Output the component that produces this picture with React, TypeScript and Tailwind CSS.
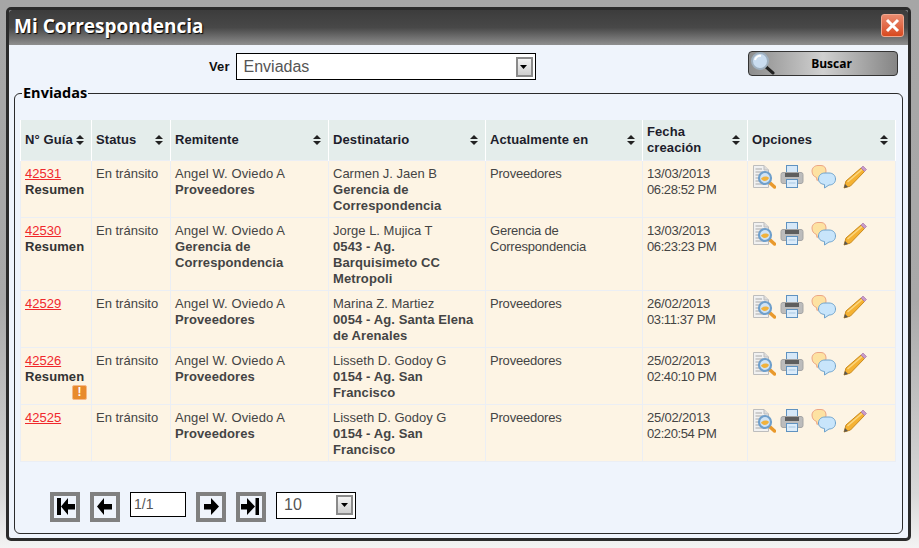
import React from "react";

type Row = {
  guia: string;
  resumen?: boolean;
  alert?: boolean;
  remitente: string;
  remArea: string;
  dest: string;
  destArea: string;
  actual: string;
  fecha: string;
  hora: string;
  height: string;
};

const rows: Row[] = [
  { guia: "42531", resumen: true, remitente: "Angel W. Oviedo A", remArea: "Proveedores", dest: "Carmen J. Jaen B", destArea: "Gerencia de Correspondencia", actual: "Proveedores", fecha: "13/03/2013", hora: "06:28:52 PM", height: "h-[57px]" },
  { guia: "42530", resumen: true, remitente: "Angel W. Oviedo A", remArea: "Gerencia de Correspondencia", dest: "Jorge L. Mujica T", destArea: "0543 - Ag. Barquisimeto CC Metropoli", actual: "Gerencia de Correspondencia", fecha: "13/03/2013", hora: "06:23:23 PM", height: "h-[73px]" },
  { guia: "42529", remitente: "Angel W. Oviedo A", remArea: "Proveedores", dest: "Marina Z. Martiez", destArea: "0054 - Ag. Santa Elena de Arenales", actual: "Proveedores", fecha: "26/02/2013", hora: "03:11:37 PM", height: "h-[57px]" },
  { guia: "42526", resumen: true, alert: true, remitente: "Angel W. Oviedo A", remArea: "Proveedores", dest: "Lisseth D. Godoy G", destArea: "0154 - Ag. San Francisco", actual: "Proveedores", fecha: "25/02/2013", hora: "02:40:10 PM", height: "h-[57px]" },
  { guia: "42525", remitente: "Angel W. Oviedo A", remArea: "Proveedores", dest: "Lisseth D. Godoy G", destArea: "0154 - Ag. San Francisco", actual: "Proveedores", fecha: "25/02/2013", hora: "02:20:54 PM", height: "h-[57px]" },
];

const SortIcon = () => (
  <svg width="8" height="10" viewBox="0 0 8 10" className="shrink-0">
    <path d="M4 0 L8 4 H0 Z M0 6 H8 L4 10 Z" fill="#222" />
  </svg>
);

const Arrow = () => (
  <svg width="8" height="8" viewBox="0 0 8 8">
    <path d="M0 2 H7 L3.5 6 Z" fill="#000" />
  </svg>
);

const SelectArrow = () => (
  <span className="flex h-[20px] w-[17px] items-center justify-center border-2 border-[#8a8a8a] bg-gradient-to-b from-[#f4f4f4] to-[#cfcfcf]">
    <Arrow />
  </span>
);

const DocIcon = () => (
  <svg width="24" height="24" viewBox="0 0 24 24" className="shrink-0">
    <path d="M1.5 0.5 H12 L16.5 5 V22.5 H1.5 Z" fill="#f1f1f1" stroke="#bdbdbd" />
    <path d="M12 0.5 V5 H16.5" fill="#dcdcdc" stroke="#bdbdbd" />
    <path d="M3.5 4 H10 M3.5 7 H14 M3.5 10 H8 M3.5 13 H7 M3.5 16 H7 M3.5 19 H14" stroke="#a9a9a9" />
    <path d="M17.5 17.5 L22.5 22" stroke="#e9992c" strokeWidth="3.5" strokeLinecap="round" />
    <circle cx="13" cy="13" r="6" fill="#cfe3f5" stroke="#6f9fcb" strokeWidth="2.2" />
    <path d="M9 13.5 C10.5 11 15.5 11 17 13 C15.5 16.5 10.5 17 9 13.5 Z" fill="#f1b23c" />
  </svg>
);

const PrintIcon = () => (
  <svg width="24" height="24" viewBox="0 0 24 24" className="shrink-0">
    <rect x="6.5" y="0.5" width="11" height="9" fill="#d6e8f8" stroke="#5f92c0" />
    <rect x="1" y="7.5" width="22" height="11" rx="2" fill="#bcbcbc" stroke="#a5a5a5" />
    <rect x="5" y="8" width="14" height="4" fill="#5e5e5e" />
    <rect x="6.5" y="14.5" width="11" height="8" fill="#dcecfa" stroke="#5f92c0" />
    <path d="M8.5 18 H15.5" stroke="#a5c6e2" />
  </svg>
);

const ChatIcon = () => (
  <svg width="26" height="24" viewBox="0 0 26 24" className="shrink-0">
    <path d="M7 0.5 H10 C13.5 0.5 15 3 15 6 C15 10 12 13 9 13 L6 15.5 L5.5 12.5 C2.5 11.5 1 9 1 6 C1 3 3.5 0.5 7 0.5 Z" fill="#fde2a2" stroke="#eca585" />
    <path d="M14 8 H18 C22 8 24.5 10.5 24.5 14 C24.5 18 21.5 20 18 20 L13.5 23 L13.5 19.5 C9.5 19 7.5 17 7.5 14 C7.5 10.5 10 8 14 8 Z" fill="#c8e5fb" stroke="#6fa3cc" />
  </svg>
);

const PencilIcon = () => (
  <svg width="24" height="24" viewBox="0 0 24 24" className="shrink-0">
    <path d="M1 23 L3 16 L18 3 L21.5 6.5 L7.5 21 Z" fill="#f5b233" stroke="#c98a1e" />
    <path d="M4.5 17 L19 4.5" stroke="#fbd780" strokeWidth="1.5" />
    <path d="M1 23 L2 19 L5 22 Z" fill="#555" />
    <path d="M18 3 L20 1 L23.5 4.5 L21.5 6.5 Z" fill="#c99ac9" stroke="#a878a8" strokeWidth="0.7" />
  </svg>
);

const SearchIcon = () => (
  <svg width="25" height="25" viewBox="0 0 25 25" className="absolute left-[1px] top-[-1px]">
    <path d="M15 15 L23 22" stroke="#222" strokeWidth="3" strokeLinecap="round" />
    <circle cx="10" cy="10" r="8" fill="#c9dcf0" stroke="#9fb0c0" strokeWidth="2" />
    <path d="M5 9 a5 5 0 0 1 6 -4" stroke="#fff" strokeWidth="2" fill="none" />
  </svg>
);

const PageButton = ({ d }: { d: string }) => (
  <button className="flex h-[30px] w-[30px] items-center justify-center border-[4px] border-[#808080] bg-[#eff4fc]">
    <svg width="22" height="22" viewBox="0 0 22 22">
      <path d={d} fill="#000" />
    </svg>
  </button>
);

const th = "border-x border-white bg-[#e4edeb] px-[4px] pt-[1px] text-left font-bold align-middle";

const Header = ({ children, w }: { children: React.ReactNode; w: string }) => (
  <th className={`${th} ${w}`}>
    <div className="flex items-center justify-between pr-[3px] text-[#1d1d2b]">
      <span className="leading-[16px]">{children}</span>
      <SortIcon />
    </div>
  </th>
);

const td = "border border-[#ebeef4] bg-[#fdf4e4] px-[4px] pt-[5px] align-top leading-[16px] tracking-normal text-[#444]";

export default function App() {
  return (
    <div className="h-[548px] w-[919px] overflow-hidden bg-[linear-gradient(180deg,#a6a6a6_0%,#a9a9a9_55%,#d8d8d8_90%,#f3f3f3_100%)] pl-[6px] pt-[7px] font-['Liberation_Sans',sans-serif] text-[13px] tracking-[0.1px]">
      <div className="h-[534px] w-[905px] rounded-[5px] border-[3px] border-[#2b2b2b] bg-[#eff4fc]">
        <div className="flex h-[35px] items-start justify-between rounded-t-[3px] bg-gradient-to-b from-[#3c3c3c] via-[#484848] to-[#8f8f8f] pl-[5px] pr-[4px] pt-[4px]">
          <span className="font-['Open_Sans',sans-serif] text-[19px] font-bold leading-[25px] tracking-normal text-white [text-shadow:1px_1px_1px_#000]">
            Mi Correspondencia
          </span>
          <button className="flex h-[23px] w-[23px] items-center justify-center rounded-[3px] border border-[#f0a890] bg-gradient-to-b from-[#e98a6e] to-[#d8481c]">
            <svg width="15" height="15" viewBox="0 0 15 15">
              <path d="M2 2 L13 13 M13 2 L2 13" stroke="#fff" strokeWidth="3" />
            </svg>
          </button>
        </div>

        <div className="relative flex h-[40px] items-start pl-[200px] pt-[8px]">
          <span className="mr-[6px] mt-[7px] text-[13px] font-bold leading-[14px] text-[#111]">Ver</span>
          <div className="flex h-[27px] w-[300px] items-center justify-between border border-black bg-white pl-[7px] pr-[2px]">
            <span className="text-[16px] tracking-normal text-[#555]">Enviadas</span>
            <SelectArrow />
          </div>
          <button className="relative ml-[212px] mt-[-2px] h-[25px] w-[150px] shrink-0 rounded-[4px] border border-[#333] bg-gradient-to-r from-[#8d8d8d] via-[#d0d0d0] to-[#858585] pl-[18px] text-center font-['Open_Sans',sans-serif] text-[12px] font-bold tracking-normal text-black">
            <SearchIcon />
            Buscar
          </button>
        </div>

        <fieldset className="mx-[5px] h-[449px] rounded-[6px] border border-[#2b2b2b] px-[5px] pb-0 pt-[19px]">
          <legend className="ml-[2px] px-[1px] font-['Open_Sans',sans-serif] text-[14.5px] font-bold leading-[16px] tracking-normal text-black">
            Enviadas
          </legend>
          <table className="w-[875px] table-fixed border-collapse">
            <thead>
              <tr className="h-[40px]">
                <Header w="w-[71px]">N° Guía</Header>
                <Header w="w-[79px]">Status</Header>
                <Header w="w-[158px]">Remitente</Header>
                <Header w="w-[157px]">Destinatario</Header>
                <Header w="w-[157px]">Actualmente en</Header>
                <Header w="w-[105px]">Fecha creación</Header>
                <Header w="w-[148px]">Opciones</Header>
              </tr>
            </thead>
            <tbody>
              {rows.map((r) => (
                <tr key={r.guia} className={r.height}>
                  <td className={td}>
                    <a className="text-[#f0282c] underline">{r.guia}</a>
                    {r.resumen && <div className="font-bold tracking-[0.1px] text-[#333]">Resumen</div>}
                    {r.alert && (
                      <div className="flex justify-end">
                        <span className="flex h-[15px] w-[15px] items-center justify-center rounded-[2px] border border-[#f5b98a] bg-[#e88a2c] text-[12px] font-bold leading-none text-white">
                          !
                        </span>
                      </div>
                    )}
                  </td>
                  <td className={td}>En tránsito</td>
                  <td className={td}>
                    <span className="tracking-[0.1px]">{r.remitente}</span>
                    <div className="font-bold tracking-[0.1px]">{r.remArea}</div>
                  </td>
                  <td className={td}>
                    {r.dest}
                    <div className="font-bold tracking-[0.1px]">{r.destArea}</div>
                  </td>
                  <td className={td}>
                    <span className="tracking-[-0.2px]">{r.actual}</span>
                  </td>
                  <td className={td}>
                    <span className="tracking-[-0.2px]">{r.fecha}</span>
                    <div className="tracking-[-0.4px]">{r.hora}</div>
                  </td>
                  <td className={td}>
                    <div className="mt-[-1px] flex items-start">
                      <DocIcon />
                      <span className="w-[4px] shrink-0" />
                      <PrintIcon />
                      <span className="w-[7px] shrink-0" />
                      <ChatIcon />
                      <span className="w-[6px] shrink-0" />
                      <PencilIcon />
                    </div>
                  </td>
                </tr>
              ))}
            </tbody>
          </table>

          <div className="ml-[30px] mt-[30px] flex items-start gap-[10px]">
            <PageButton d="M3 2 H7 V19 H3 Z M7 10.5 L14 2 V8 H21 V13.5 H14 V19 Z" />
            <PageButton d="M3 10.5 L10 2 V8 H18 V13.5 H10 V19 Z" />
            <input readOnly value="1/1" className="h-[25px] w-[56px] border border-black bg-white pl-[3px] text-[14px] tracking-normal text-[#555]" />
            <PageButton d="M4 8 H11 V2 L19 10.5 L11 19 V13.5 H4 Z" />
            <PageButton d="M1 8 H7 V2 L15 10.5 L7 19 V13.5 H1 Z M15.5 2 H19 V19 H15.5 Z" />
            <div className="flex h-[27px] w-[80px] items-center justify-between border border-black bg-white pl-[7px] pr-[2px]">
              <span className="text-[16px] tracking-normal text-[#555]">10</span>
              <SelectArrow />
            </div>
          </div>
        </fieldset>
      </div>
    </div>
  );
}
